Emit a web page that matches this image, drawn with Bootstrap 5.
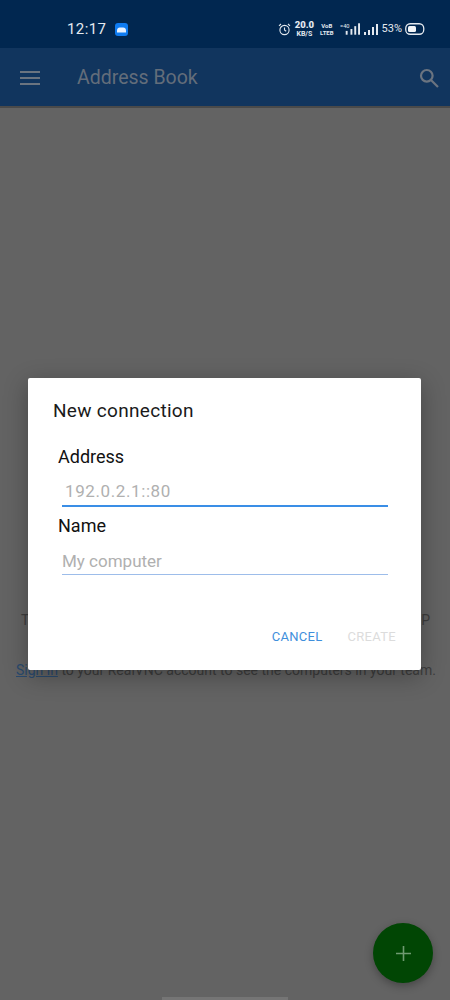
<!DOCTYPE html>
<html lang="en">
<head>
  <meta charset="UTF-8">
  <meta name="viewport" content="width=device-width, initial-scale=1.0">
  <title>Address Book</title>
  <link href="https://cdn.jsdelivr.net/npm/bootstrap@5.3.3/dist/css/bootstrap.min.css" rel="stylesheet">
  <style>
    body {
      font-family: Roboto, "Liberation Sans", sans-serif;
      background-color: #636363;
      margin: 0;
    }

    .phone-screen {
      width: 450px;
      height: 1000px;
      overflow: hidden;
      background-color: #636363;
    }

    /* status bar */
    .status-strip {
      height: 48px;
      background-color: #012750;
      color: #e4e9ef;
      padding: 10px 25px 0 67px;
    }

    .status-time { font-size: 15px; letter-spacing: .4px; }
    .status-app { margin-left: 9px; }
    .status-speed { font-size: 7px; font-weight: 700; line-height: 8px; text-align: center; margin-left: 4px; }
    .status-speed b { display: block; font-size: 9.5px; line-height: 10px; }
    .status-volte { font-size: 6px; font-weight: 700; line-height: 7px; text-align: center; margin-left: 6px; }
    .status-sim { margin-left: 6px; }
    .status-sim-two { margin-left: 4px; }
    .status-pct { font-size: 11px; margin-left: 3px; }
    .status-batt { margin-left: 3px; }

    /* app bar */
    .app-strip {
      height: 60px;
      background-color: #11355e;
      color: #636d7a;
      border-bottom: 2px solid #4a4a4a;
      padding: 2px 11px 0 20px;
    }

    .app-title { font-size: 19.5px; margin-left: 37px; line-height: 1; }

    /* text behind the dialog */
    .empty-copy {
      padding: 502px 15px 0 16px;
      color: #3d3d3d;
      font-size: 14px;
      line-height: 20px;
      white-space: nowrap;
    }

    .empty-copy a { color: #2a4a6e; }
    .empty-line-top { padding: 0 5px; margin-bottom: 30px; }

    /* dialog */
    .connect-dialog {
      left: 28px;
      top: 378px;
      width: 393px;
      height: 292px;
      background-color: #fff;
      border-radius: 2px;
      box-shadow: 0 6px 24px rgba(0, 0, 0, .3);
      padding: 21px 25px 0 25px;
    }

    .dialog-title { font-size: 19px; line-height: 24px; color: #1a1a1a; margin: 0 0 24px; font-weight: 400; letter-spacing: .3px; }
    .field-wrap { margin: 0 8px 0 9px; }
    .field-label { font-size: 18px; line-height: 20px; color: #111; margin: 0 0 0 -4px; display: block; }

    .field-input {
      display: block;
      width: 100%;
      border: 0;
      border-bottom: 1px solid #9dbdea;
      border-radius: 0;
      outline: 0;
      padding: 12px 0 0;
      height: 39px;
      font-size: 17px;
      background: transparent;
      color: #333;
    }

    .field-input::placeholder { color: #b0b0b0; opacity: 1; }
    .field-active { border-bottom: 2px solid #3a8ee6; height: 40px; margin-bottom: 9px; padding: 10px 0 0 3px; letter-spacing: .6px; }

    .dialog-actions { margin-top: 53px; gap: 25px; }
    .dialog-btn { font-size: 13px; padding: 0; border: 0; background: none; letter-spacing: .3px; line-height: 18px; }
    .dialog-btn-cancel { color: #3f8fdc; }
    .dialog-btn-create { color: #dcdcdc; }

    /* fab and home bar */
    .add-fab {
      right: 17px;
      top: 923px;
      width: 60px;
      height: 60px;
      background-color: #014604;
      box-shadow: 0 3px 8px rgba(0, 0, 0, .3);
    }

    .home-pill {
      left: 162px;
      top: 997px;
      width: 126px;
      height: 3px;
      background-color: #757575;
    }
  </style>
</head>
<body>
  <div class="phone-screen position-relative">

    <!-- Status bar -->
    <div class="status-strip d-flex align-items-center">
      <span class="status-time">12:17</span>
      <svg class="status-app" width="13" height="13" viewBox="0 0 13 13">
        <rect width="13" height="13" rx="3" fill="#0f7cf2"/>
        <path d="M2 9.5V7.2C2 5.6 3.2 4.4 4.8 4.4h3.4C9.8 4.4 11 5.6 11 7.2v2.3z" fill="#e8f2ff"/>
      </svg>
      <div class="ms-auto d-flex align-items-center">
        <svg width="13" height="13" viewBox="0 0 13 13" fill="none" stroke="#e4e9ef" stroke-width="1.1">
          <circle cx="6.5" cy="7" r="4.6"/>
          <path d="M6.5 4.4V7l1.7 1.2M1 2.8 3 1M12 2.8 10 1"/>
        </svg>
        <div class="status-speed"><b>20.0</b>KB/S</div>
        <div class="status-volte">VoB<br>LTEB</div>
        <svg class="status-sim" width="20" height="14" viewBox="0 0 21 14" fill="#e4e9ef">
          <rect x="6" y="9" width="2" height="4"/>
          <rect x="11" y="7" width="2" height="6"/>
          <rect x="15" y="4" width="2" height="9"/>
          <rect x="19" y="1" width="2" height="12"/>
          <text x="0" y="6" font-size="6" font-family="Roboto, sans-serif">=40</text>
        </svg>
        <svg class="status-sim-two" width="15" height="13" viewBox="0 0 15 13" fill="#e4e9ef">
          <rect x="0" y="9" width="2" height="3"/>
          <rect x="4" y="7" width="2" height="5"/>
          <rect x="8" y="4" width="2" height="8"/>
          <rect x="12" y="1" width="2" height="11"/>
        </svg>
        <span class="status-pct">53%</span>
        <svg class="status-batt" width="20" height="12" viewBox="0 0 20 12">
          <rect x=".75" y=".75" width="18" height="10.5" rx="4.5" fill="none" stroke="#e4e9ef" stroke-width="1.3"/>
          <rect x="3" y="3" width="8" height="6" rx="1.5" fill="#f4f6f8"/>
        </svg>
      </div>
    </div>

    <!-- App bar -->
    <div class="app-strip d-flex align-items-center">
      <svg width="20" height="14" viewBox="0 0 20 14" fill="#6b7480">
        <rect y="0" width="20" height="2"/>
        <rect y="6" width="20" height="2"/>
        <rect y="12" width="20" height="2"/>
      </svg>
      <span class="app-title">Address Book</span>
      <svg class="ms-auto" width="20" height="20" viewBox="0 0 20 20" fill="none" stroke="#6b7480" stroke-width="2.2">
        <circle cx="7.8" cy="7.8" r="5.8"/>
        <path d="m12 12 7 7"/>
      </svg>
    </div>

    <!-- Text under the dialog -->
    <div class="empty-copy">
      <div class="empty-line-top d-flex justify-content-between"><span>T</span><span>P</span></div>
      <div>
        <a href="#">Sign in</a> to your RealVNC account to see the computers in your team.
      </div>
    </div>

    <!-- Dialog -->
    <div class="connect-dialog position-absolute">
      <h5 class="dialog-title">New connection</h5>
      <form class="field-wrap">
        <label class="field-label" for="addr">Address</label>
        <input class="field-input field-active" id="addr" type="text" placeholder="192.0.2.1::80">
        <label class="field-label" for="conn-name">Name</label>
        <input class="field-input" id="conn-name" type="text" placeholder="My computer">
      </form>
      <div class="dialog-actions d-flex justify-content-end">
        <button type="button" class="dialog-btn dialog-btn-cancel">CANCEL</button>
        <button type="button" class="dialog-btn dialog-btn-create">CREATE</button>
      </div>
    </div>

    <!-- Add button -->
    <div class="add-fab position-absolute rounded-circle d-flex align-items-center justify-content-center">
      <svg width="15" height="15" viewBox="0 0 15 15" stroke="#6f9a71" stroke-width="1.6">
        <path d="M7.5 0v15M0 7.5h15"/>
      </svg>
    </div>

    <div class="home-pill position-absolute"></div>
  </div>

  <script src="https://cdn.jsdelivr.net/npm/bootstrap@5.3.3/dist/js/bootstrap.bundle.min.js"></script>
</body>
</html>
